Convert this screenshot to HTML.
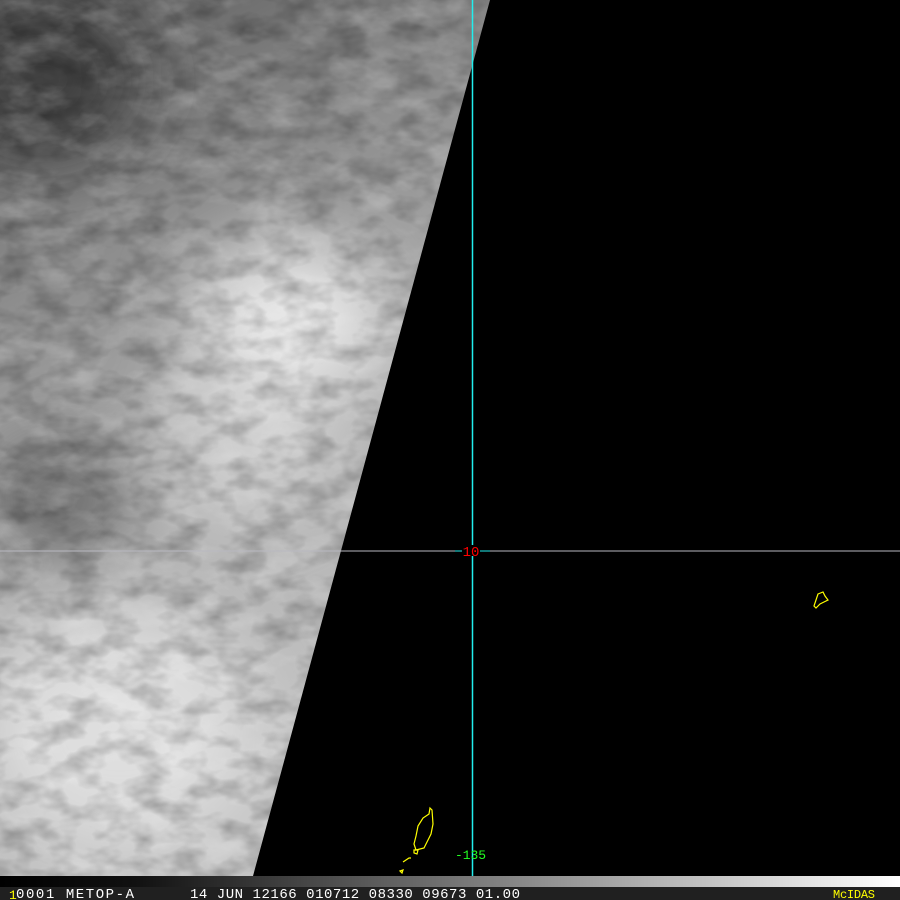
<!DOCTYPE html>
<html><head><style>
html,body{margin:0;padding:0;background:#000;width:900px;height:900px;overflow:hidden}
svg{display:block}
</style></head><body>
<svg width="900" height="900" viewBox="0 0 900 900" xmlns="http://www.w3.org/2000/svg">
<defs>
<clipPath id="c"><polygon points="0,0 490,0 253,876 0,876"/></clipPath>
<linearGradient id="gv" x1="0" y1="0" x2="0.3" y2="1">
<stop offset="0" stop-color="#5a5a5a"/><stop offset="0.3" stop-color="#8a8a8a"/><stop offset="0.6" stop-color="#b0b0b0"/><stop offset="1" stop-color="#c4c4c4"/>
</linearGradient>
<linearGradient id="gb" x1="0" y1="0" x2="1" y2="0">
<stop offset="0" stop-color="#000"/><stop offset="0.15" stop-color="#111"/><stop offset="1" stop-color="#fff"/>
</linearGradient>
<filter id="bl" x="-50%" y="-50%" width="200%" height="200%"><feGaussianBlur stdDeviation="35"/></filter>
<filter id="t" x="0" y="0" width="1" height="1">
<feTurbulence type="fractalNoise" baseFrequency="0.02 0.035" numOctaves="4" seed="7"/>
<feColorMatrix type="matrix" values="0 0 0 0 1  0 0 0 0 1  0 0 0 0 1  1.6 0 0 0 -0.75"/>
</filter>
<filter id="t2" x="0" y="0" width="1" height="1">
<feTurbulence type="fractalNoise" baseFrequency="0.03 0.05" numOctaves="3" seed="2"/>
<feColorMatrix type="matrix" values="0 0 0 0 0  0 0 0 0 0  0 0 0 0 0  1.5 0 0 0 -0.6"/>
</filter>
</defs>
<rect width="900" height="900" fill="#000"/>
<g clip-path="url(#c)">
<rect width="500" height="876" fill="url(#gv)"/>
<g filter="url(#bl)">
<ellipse cx="290" cy="320" rx="100" ry="80" fill="#e6e6e6"/>
<ellipse cx="120" cy="730" rx="140" ry="120" fill="#dedede"/>
<ellipse cx="250" cy="450" rx="90" ry="70" fill="#cfcfcf"/>
<ellipse cx="40" cy="80" rx="100" ry="80" fill="#404040"/>
<ellipse cx="60" cy="500" rx="70" ry="60" fill="#6a6a6a"/>
</g>
<rect width="500" height="876" filter="url(#t2)" opacity="0.35"/>
<rect width="500" height="876" filter="url(#t)" opacity="0.35"/>
</g>
<line x1="0" y1="551" x2="900" y2="551" stroke="#b8b8c0" stroke-width="1"/>
<line x1="455" y1="551" x2="490" y2="551" stroke="#2ee" stroke-width="1"/>
<line x1="472.5" y1="0" x2="472.5" y2="876" stroke="#2ee" stroke-width="1.5"/>
<rect x="462" y="545" width="18" height="11" fill="#000"/>
<text x="471" y="556" fill="#f00" font-family="Liberation Mono, monospace" font-size="14" text-anchor="middle">10</text>
<text x="455" y="859" fill="#2f2" font-family="Liberation Mono, monospace" font-size="13" textLength="31">-135</text>
<g fill="none" stroke="#ff0" stroke-width="1.2">
<path d="M430,808 l2,2 l1,14 l-2,10 l-3,6 l-4,8 l-8,2 l-2,-6 l2,-8 l2,-10 l5,-8 l6,-4 z"/>
<path d="M414,850 l4,0 l-1,4 l-3,-1 z"/>
<path d="M403,862 l6,-4 l2,0"/>
<path d="M400,871 l3,-1 l-1,3 z"/>
<path d="M818,594 l5,-2 l2,4 l3,4 l-4,2 l-4,2 l-4,4 l-2,-2 z"/>
</g>
<rect x="0" y="876" width="900" height="11" fill="url(#gb)"/>
<rect x="0" y="887" width="900" height="13" fill="#202020"/>
<text x="9" y="899" fill="#ff0" font-family="Liberation Mono, monospace" font-size="13">1</text>
<text x="16" y="898" fill="#fff" font-family="Liberation Mono, monospace" font-size="14" textLength="118">0001 METOP-A</text>
<text x="190" y="898" fill="#fff" font-family="Liberation Mono, monospace" font-size="14" textLength="330">14 JUN 12166 010712 08330 09673 01.00</text>
<text x="833" y="898" fill="#ff0" font-family="Liberation Mono, monospace" font-size="12" textLength="42">McIDAS</text>
</svg>
</body></html>
